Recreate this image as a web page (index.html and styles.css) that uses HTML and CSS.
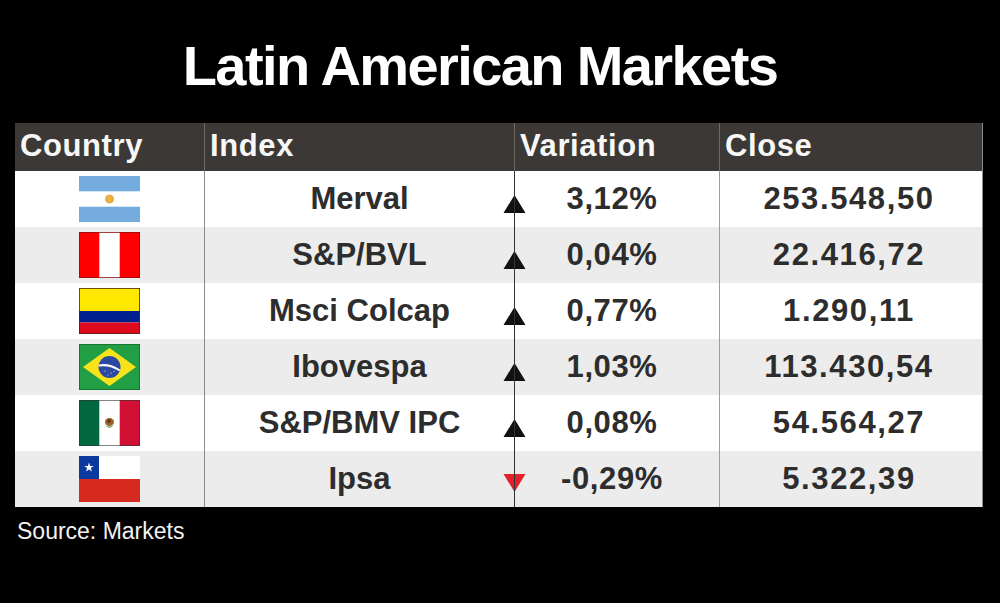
FILE: index.html
```html
<!DOCTYPE html>
<html lang="en">
<head>
<meta charset="utf-8">
<title>Latin American Markets</title>
<link rel="stylesheet" href="styles.css">
</head>
<body>
<main class="page">
  <h1 class="title">Latin American Markets</h1>
  <div class="table">
    <div class="th">Country</div>
    <div class="th">Index</div>
    <div class="th">Variation</div>
    <div class="th">Close</div>

    <div class="td flag-cell">
      <svg class="flag" viewBox="0 0 61 46" width="61" height="46">
        <rect width="61" height="46" fill="#fff"/>
        <rect width="61" height="15.3" fill="#74acdf"/>
        <rect y="30.7" width="61" height="15.3" fill="#74acdf"/>
        <circle cx="30.5" cy="23" r="4" fill="#f2b13c" stroke="#d99a30" stroke-width="0.8"/>
      </svg>
    </div>
    <div class="td name">Merval</div>
    <div class="td var"><svg class="tri" viewBox="0 0 23 18" width="23" height="18"><polygon points="0.5,18 11.5,0 22.5,18" fill="#111"/><rect x="11" y="0" width="1" height="18" fill="#333"/></svg>3,12%</div>
    <div class="td num">253.548,50</div>

    <div class="td flag-cell alt">
      <svg class="flag" viewBox="0 0 61 46" width="61" height="46">
        <rect width="61" height="46" fill="#fff"/>
        <rect width="20.3" height="46" fill="#ff0000"/>
        <rect x="40.7" width="20.3" height="46" fill="#ff0000"/>
        <rect x="0.4" y="0.4" width="60.2" height="45.2" fill="none" stroke="#8a1010" stroke-width="0.8"/>
      </svg>
    </div>
    <div class="td name alt">S&amp;P/BVL</div>
    <div class="td var alt"><svg class="tri" viewBox="0 0 23 18" width="23" height="18"><polygon points="0.5,18 11.5,0 22.5,18" fill="#111"/><rect x="11" y="0" width="1" height="18" fill="#333"/></svg>0,04%</div>
    <div class="td num alt">22.416,72</div>

    <div class="td flag-cell">
      <svg class="flag" viewBox="0 0 61 46" width="61" height="46">
        <rect width="61" height="23" fill="#ffe800"/>
        <rect y="23" width="61" height="11.5" fill="#00208f"/>
        <rect y="34.5" width="61" height="11.5" fill="#dc0a1c"/>
        <rect x="0.4" y="0.4" width="60.2" height="45.2" fill="none" stroke="#4a2a10" stroke-width="0.8"/>
      </svg>
    </div>
    <div class="td name">Msci Colcap</div>
    <div class="td var"><svg class="tri" viewBox="0 0 23 18" width="23" height="18"><polygon points="0.5,18 11.5,0 22.5,18" fill="#111"/><rect x="11" y="0" width="1" height="18" fill="#333"/></svg>0,77%</div>
    <div class="td num">1.290,11</div>

    <div class="td flag-cell alt">
      <svg class="flag" viewBox="0 0 61 46" width="61" height="46">
        <rect width="61" height="46" fill="#229e45"/>
        <polygon points="4,23 30.5,4 57,23 30.5,42" fill="#f8e31a"/>
        <circle cx="30.5" cy="23" r="11" fill="#2b49a3"/>
        <path d="M19.8 20.6 Q30 18.5 41 25.5 L40.6 27.3 Q30 20.6 19.6 22.6 Z" fill="#fff"/>
        <circle cx="26" cy="27" r="0.6" fill="#fff"/>
        <circle cx="32" cy="29" r="0.6" fill="#fff"/>
        <circle cx="35" cy="27.5" r="0.5" fill="#fff"/>
        <circle cx="29" cy="31" r="0.5" fill="#fff"/>
        <rect x="0.4" y="0.4" width="60.2" height="45.2" fill="none" stroke="#1a6a30" stroke-width="0.8"/>
      </svg>
    </div>
    <div class="td name alt">Ibovespa</div>
    <div class="td var alt"><svg class="tri" viewBox="0 0 23 18" width="23" height="18"><polygon points="0.5,18 11.5,0 22.5,18" fill="#111"/><rect x="11" y="0" width="1" height="18" fill="#333"/></svg>1,03%</div>
    <div class="td num alt">113.430,54</div>

    <div class="td flag-cell">
      <svg class="flag" viewBox="0 0 61 46" width="61" height="46">
        <rect width="61" height="46" fill="#fff"/>
        <rect width="20.3" height="46" fill="#00673f"/>
        <rect x="40.7" width="20.3" height="46" fill="#d21034"/>
        <ellipse cx="30.5" cy="22" rx="4.5" ry="4" fill="#a0612a"/>
        <ellipse cx="30" cy="21" rx="2.2" ry="2" fill="#6b3a18"/>
        <path d="M25.5 24 Q30.5 29.5 35.5 24 Q33 27.5 30.5 27.7 Q28 27.5 25.5 24 Z" fill="#3f8a3a"/>
        <rect x="0.4" y="0.4" width="60.2" height="45.2" fill="none" stroke="#333" stroke-width="0.6"/>
      </svg>
    </div>
    <div class="td name">S&amp;P/BMV IPC</div>
    <div class="td var"><svg class="tri" viewBox="0 0 23 18" width="23" height="18"><polygon points="0.5,18 11.5,0 22.5,18" fill="#111"/><rect x="11" y="0" width="1" height="18" fill="#333"/></svg>0,08%</div>
    <div class="td num">54.564,27</div>

    <div class="td flag-cell alt">
      <svg class="flag" viewBox="0 0 61 46" width="61" height="46">
        <rect width="61" height="23" fill="#fff"/>
        <rect y="23" width="61" height="23" fill="#d72b1f"/>
        <rect width="20" height="23" fill="#0a3a9e"/>
        <polygon points="10,6.5 11.12,9.96 14.76,9.96 11.81,12.09 12.94,15.55 10,13.4 7.06,15.55 8.19,12.09 5.24,9.96 8.88,9.96" fill="#fff"/>
      </svg>
    </div>
    <div class="td name alt">Ipsa</div>
    <div class="td var alt"><svg class="tri down" viewBox="0 0 23 18" width="23" height="18"><polygon points="0.5,0 22.5,0 11.5,18" fill="#e3212b"/><rect x="11" y="0" width="1" height="18" fill="#333"/></svg>-0,29%</div>
    <div class="td num alt">5.322,39</div>
  </div>
  <p class="source">Source: Markets</p>
</main>
</body>
</html>
```

FILE: styles.css
```css
html, body {
  margin: 0;
  padding: 0;
  background: #000;
}

body {
  font-family: "Liberation Sans", Arial, sans-serif;
  width: 1000px;
  height: 603px;
  overflow: hidden;
}

.page {
  padding: 38px 17px 0 15px;
}

.title {
  margin: 0 0 29px 0;
  padding-right: 38px;
  height: 56px;
  font-size: 56px;
  line-height: 56px;
  font-weight: 700;
  letter-spacing: -1.6px;
  color: #fff;
  text-align: center;
}

.table {
  display: grid;
  grid-template-columns: 189px 310px 205px 263px;
  grid-template-rows: 48px repeat(6, 56px);
  width: 968px;
  border-right: 1px solid #8e8e8e;
  border-bottom: 1px solid #8e8e8e;
  box-sizing: border-box;
  height: 384px;
}

.th {
  background: #3b3835;
  color: #f7f7f7;
  font-size: 31px;
  font-weight: 700;
  letter-spacing: 0.6px;
  display: flex;
  align-items: center;
  padding: 0 0 3px 5px;
  box-sizing: border-box;
}

.th + .th {
  border-left: 1px solid #6d6965;
}

.td {
  background: #fff;
  color: #2d2d2d;
  font-size: 31px;
  font-weight: 700;
  display: flex;
  align-items: center;
  justify-content: center;
  box-sizing: border-box;
}

.td.alt {
  background: #ececec;
}

.flag {
  display: block;
}

.name {
  border-left: 1px solid #8a8a8a;
}

.var {
  position: relative;
  border-left: 1px solid #333;
  letter-spacing: 0.6px;
  padding-right: 10px;
}

.num {
  border-left: 1px solid #9c9c9c;
  letter-spacing: 1.6px;
  padding-right: 4px;
}

.tri {
  position: absolute;
  left: -12px;
  top: 24px;
}

.tri.down {
  top: 23px;
}

.source {
  margin: 12px 0 0 2px;
  font-size: 23px;
  line-height: 25px;
  color: #f2f2f2;
  letter-spacing: 0;
}
```
